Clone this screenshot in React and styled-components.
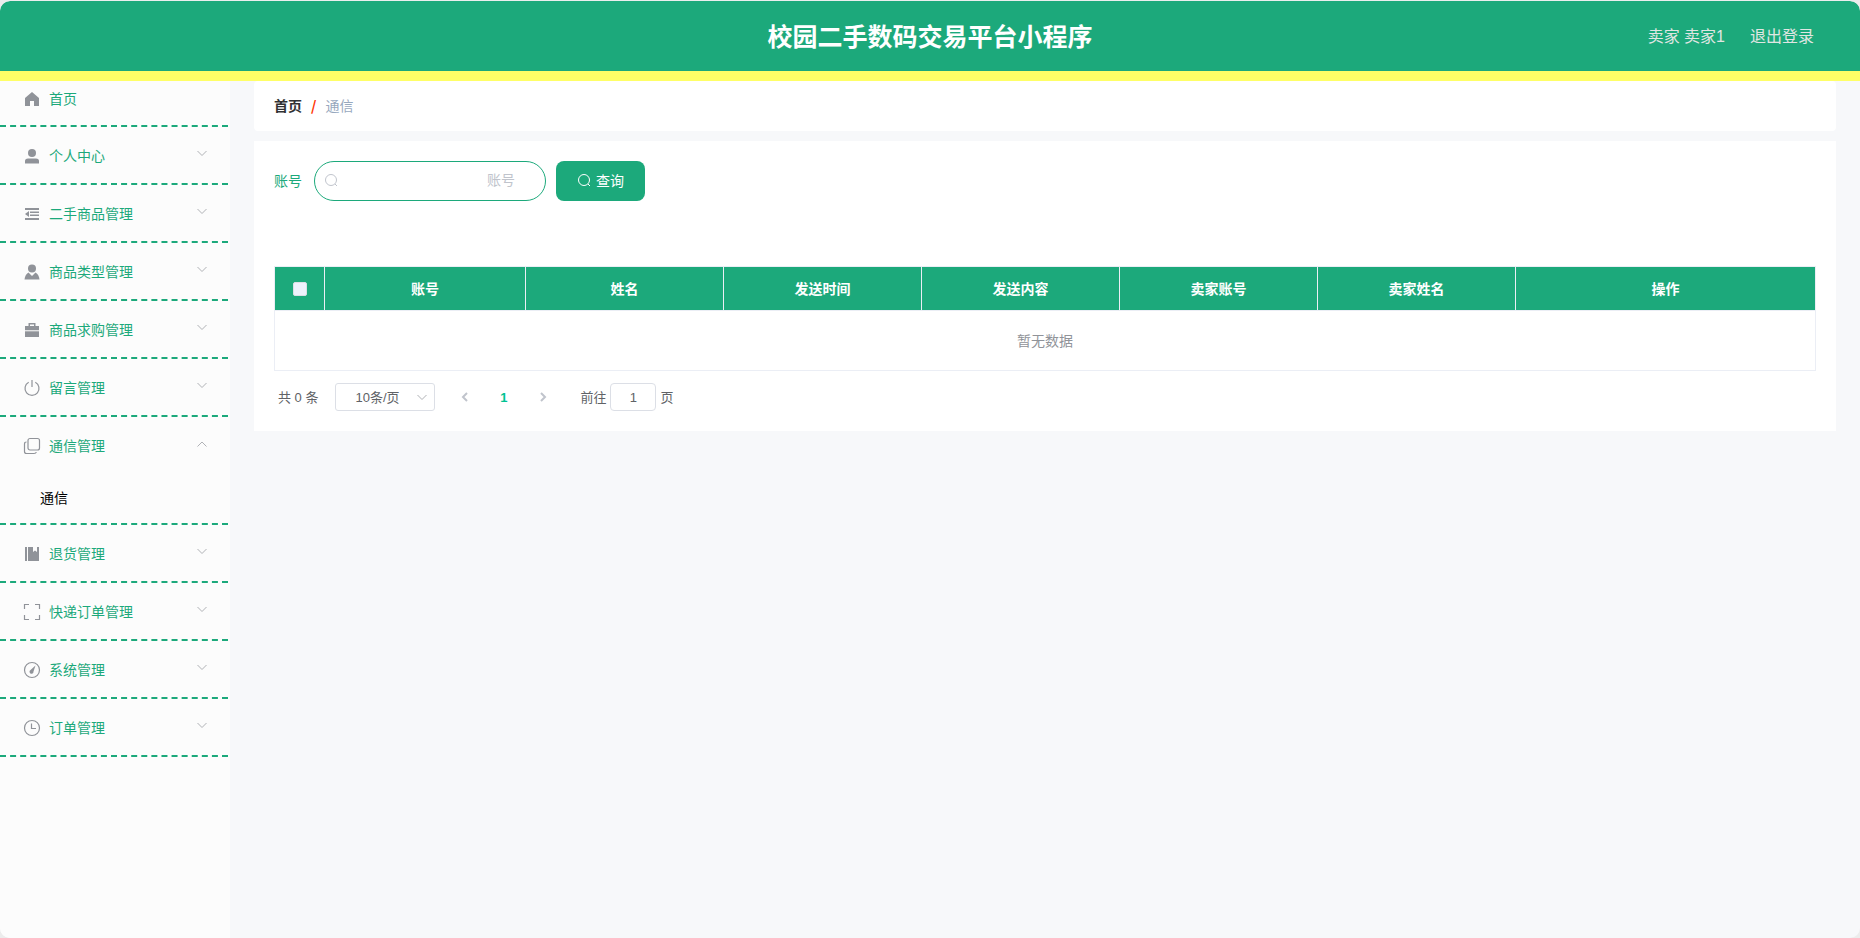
import React from "react";
import styled, { createGlobalStyle } from "styled-components";

const GlobalStyle = createGlobalStyle`
  * {
    box-sizing: border-box;
  }
  body {
    margin: 0;
    background: #ececec;
    font-family: "Liberation Sans", "Noto Sans CJK SC", sans-serif;
    font-size: 14px;
    color: #303133;
  }
  button, input, select {
    font-family: inherit;
  }
`;

const icons = {
  home: <path d="M9 2 16 8V16H11V11H7V16H2V8Z" fill="currentColor" />,
  user: (
    <g fill="currentColor">
      <circle cx="9" cy="6" r="4" />
      <path d="M2 16.5V14Q2 11.5 5 11.5H13Q16 11.5 16 14V16.5Z" />
    </g>
  ),
  fold: (
    <g fill="currentColor">
      <path d="M2 3H16V5H2ZM7 6.5H16V8H7ZM7 9.5H16V11H7ZM2 13H16V15H2Z" />
      <path d="M2 9 6 6V12Z" />
    </g>
  ),
  custom: (
    <g fill="currentColor">
      <circle cx="9" cy="5.5" r="4" />
      <path d="M1.5 16.5Q2 11.5 5.5 9.5L9 13 12.5 9.5Q16 11.5 16.5 16.5Z" />
    </g>
  ),
  cooperation: (
    <g fill="currentColor">
      <path d="M5.5 5V2H12.5V5H16V9.3H2V5ZM7 5H11V3.5H7Z" fillRule="evenodd" />
      <path d="M2 10.3H16V16H2Z" />
    </g>
  ),
  power: (
    <path d="M5.7 3.2A7 7 0 1 0 12.3 3.2M9 1V8" fill="none" stroke="currentColor" strokeWidth="1.2" />
  ),
  copy: (
    <g fill="none" stroke="currentColor" strokeWidth="1.2">
      <rect x="5" y="1.5" width="11.5" height="11.5" rx="2" />
      <path d="M3.5 5Q1.5 5 1.5 7V14.5Q1.5 16.5 3.5 16.5H11Q13 16.5 13.3 15" />
    </g>
  ),
  management: (
    <path d="M2 2H4V16H2ZM5 2H10V7L12 5.5 14 7V2H16V16H5Z" fill="currentColor" />
  ),
  screen: (
    <path
      d="M1.5 6V1.5H6M12 1.5H16.5V6M16.5 12V16.5H12M6 16.5H1.5V12"
      fill="none"
      stroke="currentColor"
      strokeWidth="1.2"
    />
  ),
  odometer: (
    <g>
      <circle cx="9" cy="9" r="7.5" fill="none" stroke="currentColor" strokeWidth="1.2" />
      <path d="M12.5 4.5 10.5 10.5A2 2 0 1 1 7.5 9Z" fill="currentColor" />
    </g>
  ),
  time: (
    <g fill="none" stroke="currentColor" strokeWidth="1.2">
      <circle cx="9" cy="9" r="7.5" />
      <path d="M8.5 4.5V9.5H13" />
    </g>
  ),
};

const menus = [
  { name: "个人中心", icon: "user" },
  { name: "二手商品管理", icon: "fold" },
  { name: "商品类型管理", icon: "custom" },
  { name: "商品求购管理", icon: "cooperation" },
  { name: "留言管理", icon: "power" },
  { name: "通信管理", icon: "copy", children: ["通信"] },
  { name: "退货管理", icon: "management" },
  { name: "快递订单管理", icon: "screen" },
  { name: "系统管理", icon: "odometer" },
  { name: "订单管理", icon: "time" },
];

const columns = ["账号", "姓名", "发送时间", "发送内容", "卖家账号", "卖家姓名", "操作"];

const MenuSvg = ({ name }) => (
  <MenuIcon viewBox="0 0 18 18" aria-hidden="true">{icons[name]}</MenuIcon>
);

const Chevron = ({ up }) => (
  <Arrow viewBox="0 0 12 12" aria-hidden="true">
    <path d={up ? "M1.5 9.5 6 5 10.5 9.5" : "M1.5 4 6 8.5 10.5 4"} />
  </Arrow>
);

const SearchSvg = () => (
  <SearchIcon viewBox="0 0 14 14" aria-hidden="true">
    <circle cx="7" cy="7" r="5.5" />
    <path d="M11 11 13 13" />
  </SearchIcon>
);

const Sidebar = () => (
  <Aside>
    <HomeLink href="#home">
      <MenuSvg name="home" />
      首页
    </HomeLink>
    {menus.map((menu) => (
      <MenuGroup key={menu.name}>
        <MenuTitle type="button" aria-expanded={!!menu.children}>
          <MenuSvg name={menu.icon} />
          <span>{menu.name}</span>
          <Chevron up={!!menu.children} />
        </MenuTitle>
        {menu.children?.map((child) => (
          <SubLink key={child} href="#message">{child}</SubLink>
        ))}
      </MenuGroup>
    ))}
  </Aside>
);

const DataTable = () => (
  <Table>
    <colgroup>
      <col className="check" />
      <col className="account" />
      <col span="5" />
      <col className="action" />
    </colgroup>
    <thead>
      <tr>
        <th><Checkbox type="checkbox" aria-label="全选" /></th>
        {columns.map((column) => (
          <th key={column}>{column}</th>
        ))}
      </tr>
    </thead>
    <tbody>
      <tr>
        <td colSpan="8">暂无数据</td>
      </tr>
    </tbody>
  </Table>
);

const Pagination = () => (
  <Pager>
    <Total>共 0 条</Total>
    <SizeBox>
      <SizeSelect aria-label="每页条数" defaultValue="10">
        <option value="10">10条/页</option>
        <option value="20">20条/页</option>
        <option value="50">50条/页</option>
      </SizeSelect>
      <Chevron />
    </SizeBox>
    <PageButton type="button" aria-label="上一页" disabled>
      <svg viewBox="0 0 12 12"><path d="M8 2 4 6 8 10" /></svg>
    </PageButton>
    <PageButton type="button" $active>1</PageButton>
    <PageButton type="button" aria-label="下一页" disabled>
      <svg viewBox="0 0 12 12"><path d="M4 2 8 6 4 10" /></svg>
    </PageButton>
    <Jump>
      <span>前往</span>
      <input type="text" defaultValue="1" />
      <span>页</span>
    </Jump>
  </Pager>
);

const App = () => {
  return (
    <Page>
      <GlobalStyle />
      <Header>
        <h1>校园二手数码交易平台小程序</h1>
        <UserBar>
          <span>卖家 卖家1</span>
          <button type="button">退出登录</button>
        </UserBar>
      </Header>
      <Body>
        <Sidebar />
        <Main>
          <Breadcrumb>
            <a href="#home">首页</a>
            <b>/</b>
            <span>通信</span>
          </Breadcrumb>
          <Content>
            <SearchForm onSubmit={(e) => e.preventDefault()}>
              <label htmlFor="account">账号</label>
              <SearchBox>
                <SearchSvg />
                <input id="account" type="text" placeholder="账号" />
              </SearchBox>
              <SearchButton type="submit">
                <SearchSvg />
                查询
              </SearchButton>
            </SearchForm>
            <DataTable />
            <Pagination />
          </Content>
        </Main>
      </Body>
    </Page>
  );
};

const Page = styled.div`
  display: flex;
  flex-direction: column;
  min-height: 100vh;
  border-top: 1px solid #ebeeee;
  border-radius: 10px;
  overflow: hidden;
`;

const Header = styled.header`
  display: grid;
  grid-template-columns: 1fr auto 1fr;
  align-items: center;
  height: 80px;
  padding: 0 46px 2px;
  background: #1ca97b;
  border-bottom: 10px solid #ffff66;
  border-radius: 10px 10px 0 0;
  h1 {
    grid-column: 2;
    margin: 0;
    font-size: 25px;
    color: #fff;
  }
`;

const UserBar = styled.div`
  display: flex;
  justify-content: flex-end;
  gap: 25px;
  font-size: 16px;
  color: #e0e6e3;
  button {
    padding: 0;
    border: 0;
    background: none;
    font-size: 16px;
    color: inherit;
    cursor: pointer;
  }
`;

const Body = styled.div`
  display: flex;
  flex: 1;
  background: #f7f8fa;
`;

const Aside = styled.nav`
  width: 230px;
  flex-shrink: 0;
  padding-right: 2px;
  background: #fcfcfc;
`;

const HomeLink = styled.a`
  display: flex;
  align-items: center;
  height: 46px;
  padding: 0 20px 10px;
  border-bottom: 2px dashed #1ca97b;
  color: #1ca97b;
  text-decoration: none;
`;

const MenuGroup = styled.div`
  border-bottom: 2px dashed #1ca97b;
`;

const Arrow = styled.svg`
  width: 12px;
  height: 12px;
  fill: none;
  stroke: #b0b2b6;
`;

const MenuTitle = styled.button`
  display: flex;
  align-items: center;
  width: 100%;
  height: 56px;
  padding: 0 20px;
  border: 0;
  background: none;
  font-size: 14px;
  color: #1ca97b;
  cursor: pointer;
  span {
    flex: 1;
    text-align: left;
  }
  ${Arrow} {
    margin-bottom: 4px;
  }
`;

const MenuIcon = styled.svg`
  width: 18px;
  height: 18px;
  margin: 2px 8px 0 3px;
  color: #909399;
`;

const SubLink = styled.a`
  display: block;
  padding-left: 40px;
  line-height: 50px;
  color: #000;
  text-decoration: none;
`;

const Main = styled.main`
  flex: 1;
  min-width: 0;
  padding: 0 24px 24px;
`;

const Breadcrumb = styled.nav`
  display: flex;
  align-items: center;
  height: 50px;
  margin-bottom: 10px;
  padding: 0 20px 2px;
  border-radius: 4px;
  background: #fff;
  a {
    font-weight: bold;
    color: #303133;
    text-decoration: none;
  }
  b {
    margin: 0 9px;
    font-family: "Noto Sans CJK SC", sans-serif;
    color: #ff3300;
  }
  span {
    color: #97a8be;
  }
`;

const Content = styled.section`
  padding: 20px;
  background: #fff;
`;

const SearchForm = styled.form`
  display: flex;
  align-items: center;
  margin-bottom: 65px;
  label {
    margin-right: 12px;
    padding-bottom: 2px;
    color: #1ca97b;
  }
`;

const SearchIcon = styled.svg`
  width: 14px;
  height: 14px;
  fill: none;
  stroke: currentColor;
`;

const SearchBox = styled.div`
  display: flex;
  align-items: center;
  width: 232px;
  height: 40px;
  margin-right: 10px;
  padding: 0 30px 2px 9px;
  border: 1px solid #1ca97b;
  border-radius: 20px;
  color: #c0c4cc;
  svg {
    flex-shrink: 0;
  }
  input {
    flex: 1;
    min-width: 0;
    padding: 0;
    border: 0;
    outline: 0;
    background: none;
    font-size: 14px;
    text-align: right;
    color: #1ca97b;
  }
  input::placeholder {
    color: #c0c4cc;
  }
`;

const SearchButton = styled.button`
  display: flex;
  align-items: center;
  gap: 5px;
  height: 40px;
  padding: 0 21px 2px;
  border: 0;
  border-radius: 8px;
  background: #1ca97b;
  font-size: 14px;
  color: #fff;
  cursor: pointer;
`;

const Table = styled.table`
  width: 100%;
  table-layout: fixed;
  border-collapse: separate;
  border-spacing: 0;
  border: 1px solid #ebeef5;
  border-right: 0;
  border-bottom: 0;
  .check {
    width: 50px;
  }
  .account {
    width: 201px;
  }
  .action {
    width: 300px;
  }
  th,
  td {
    padding: 0 0 2px;
    border-right: 1px solid #ebeef5;
    border-bottom: 1px solid #ebeef5;
    text-align: center;
  }
  th {
    height: 44px;
    background: #1ca97b;
    color: #fff;
  }
  td {
    height: 60px;
    color: #909399;
  }
`;

const Checkbox = styled.input`
  appearance: none;
  display: block;
  width: 14px;
  height: 14px;
  margin: 2px auto 0;
  border: 1px solid #dcdfe6;
  border-radius: 2px;
  background: #edf2fc;
`;

const Pager = styled.div`
  display: flex;
  align-items: center;
  height: 28px;
  margin-top: 12px;
  padding-left: 4px;
  font-size: 13px;
  color: #606266;
`;

const Total = styled.span`
  margin-right: 17px;
  padding-bottom: 2px;
`;

const SizeBox = styled.div`
  display: flex;
  align-items: center;
  width: 100px;
  height: 28px;
  margin-right: 10px;
  padding-right: 6px;
  border: 1px solid #dcdfe6;
  border-radius: 3px;
`;

const SizeSelect = styled.select`
  appearance: none;
  flex: 1;
  min-width: 0;
  padding: 0 0 0 2px;
  border: 0;
  outline: 0;
  background: none;
  font-size: 13px;
  text-align: center;
  text-align-last: center;
  color: #606266;
`;

const PageButton = styled.button`
  display: flex;
  align-items: center;
  justify-content: center;
  width: 39px;
  height: 28px;
  padding: 0;
  border: 0;
  background: none;
  font-size: 13px;
  font-weight: bold;
  color: ${({ $active }) => ($active ? "#00c292" : "#c0c4cc")};
  svg {
    width: 12px;
    height: 12px;
    fill: none;
    stroke: currentColor;
    stroke-width: 2;
  }
`;

const Jump = styled.label`
  display: flex;
  align-items: center;
  gap: 4px;
  margin-left: 18px;
  span {
    padding-bottom: 2px;
  }
  input {
    width: 46px;
    height: 28px;
    padding: 0 3px;
    border: 1px solid #dcdfe6;
    border-radius: 4px;
    outline: 0;
    background: #fff;
    font-size: 13px;
    text-align: center;
    color: #606266;
  }
`;

export default App;
